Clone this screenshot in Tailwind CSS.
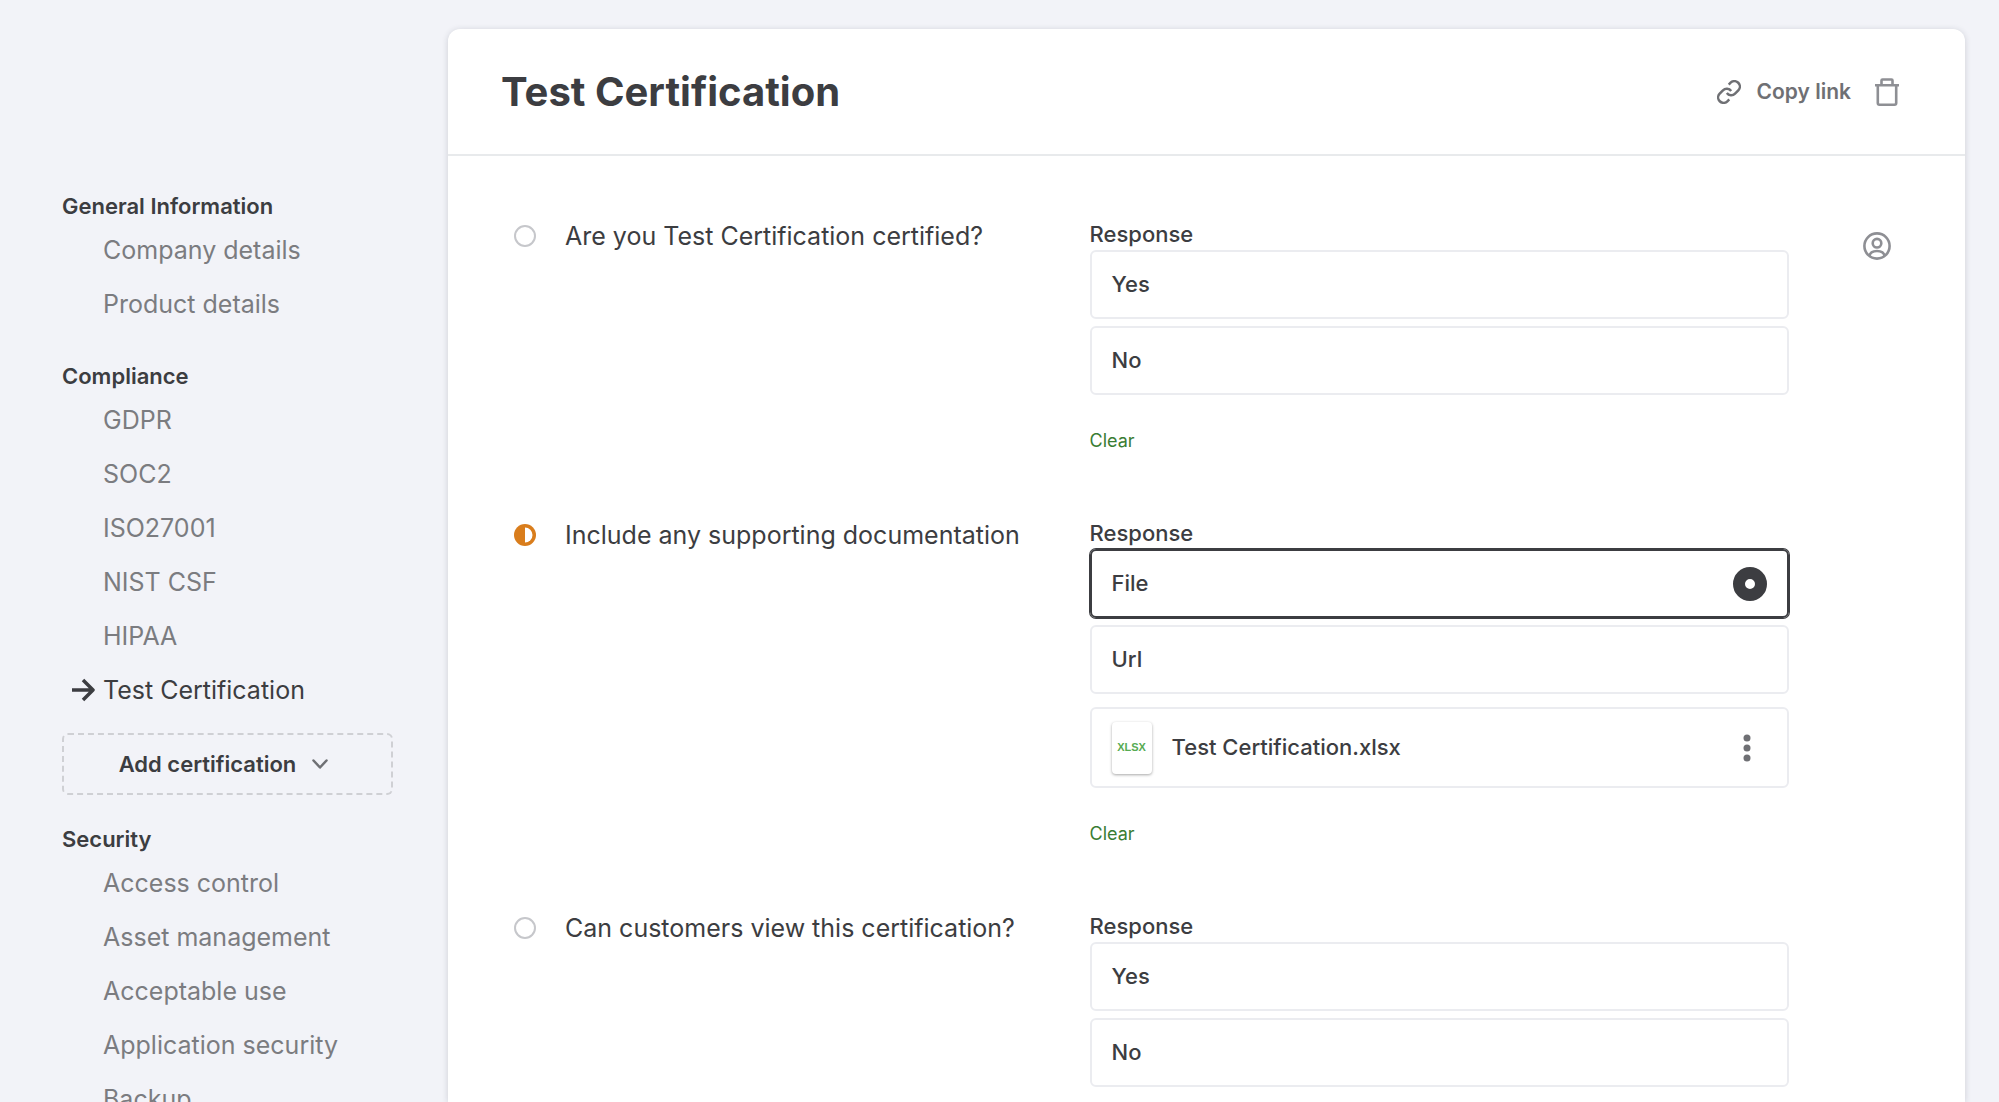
<!DOCTYPE html>
<html lang="en">
  <head>
    <meta charset="UTF-8" />
    <meta name="viewport" content="width=device-width, initial-scale=1.0" />
    <title>Test Certification</title>
    <script src="https://cdn.jsdelivr.net/npm/@tailwindcss/browser@4"></script>
  </head>
  <body class="bg-[#f2f3f8] font-['Inter',sans-serif] text-[#3c3d41]">
    <div class="flex h-screen overflow-hidden">
      <!-- Sidebar -->
      <aside class="w-[448px] shrink-0 pt-[190px] pl-[62px] pr-[55px]">
        <nav>
          <h2 class="text-[22px] leading-8 font-semibold">General Information</h2>
          <ul class="mt-px mb-[29px] pl-[41px] text-[25px] leading-[54px] text-[#7b7c80]">
            <li><a href="#" class="hover:text-black">Company details</a></li>
            <li><a href="#" class="hover:text-black">Product details</a></li>
          </ul>

          <h2 class="text-[22px] leading-8 font-semibold">Compliance</h2>
          <ul class="mt-px mb-4 pl-[41px] text-[25px] leading-[54px] text-[#7b7c80]">
            <li><a href="#" class="hover:text-black">GDPR</a></li>
            <li><a href="#" class="hover:text-black">SOC2</a></li>
            <li><a href="#" class="hover:text-black">ISO27001</a></li>
            <li><a href="#" class="hover:text-black">NIST CSF</a></li>
            <li><a href="#" class="hover:text-black">HIPAA</a></li>
            <li>
              <a href="#" class="-ml-8 flex items-center gap-2 text-[#3c3d41]">
                <svg class="h-6 w-6" viewBox="0 0 24 24" fill="none" stroke="currentColor" stroke-width="3.500">
                  <path d="M1 12h21M12 2l10 10l-10 10" stroke-linejoin="round" />
                </svg>
                Test Certification
              </a>
            </li>
          </ul>

          <button
            type="button"
            class="mb-7 flex h-[62px] w-full items-center justify-center gap-4 rounded-md border-2 border-dashed border-[#cfd0d4] pr-2 text-[22px] font-semibold"
          >
            Add certification
            <svg class="h-4 w-4" viewBox="0 0 16 16" fill="none" stroke="#6f7074" stroke-width="2.500">
              <path d="M1.500 4.500l6.500 7l6.500-7" stroke-linecap="round" stroke-linejoin="round" />
            </svg>
          </button>

          <h2 class="text-[22px] leading-8 font-semibold">Security</h2>
          <ul class="mt-px pl-[41px] text-[25px] leading-[54px] text-[#7b7c80]">
            <li><a href="#" class="hover:text-black">Access control</a></li>
            <li><a href="#" class="hover:text-black">Asset management</a></li>
            <li><a href="#" class="hover:text-black">Acceptable use</a></li>
            <li><a href="#" class="hover:text-black">Application security</a></li>
            <li><a href="#" class="hover:text-black">Backup</a></li>
          </ul>
        </nav>
      </aside>

      <!-- Certification panel -->
      <main class="mt-[29px] mr-[34px] flex-1 rounded-t-xl bg-white shadow-[0_1px_6px_rgba(40,42,60,0.18)]">
        <header class="flex h-[127px] items-center border-b-2 border-[#e8eaec] pr-[64px] pl-[53px]">
          <h1 class="flex-1 text-[40px] font-bold">Test Certification</h1>
          <button type="button" class="flex items-center gap-4 text-[21px] font-semibold text-[#6f7074]">
            <svg class="h-6 w-6" viewBox="1 1 22 22" fill="none" stroke="currentColor" stroke-width="2.300">
              <path d="M10 13a5 5 0 0 0 7.540.540l3-3a5 5 0 0 0-7.070-7.070l-1.720 1.710" />
              <path d="M14 11a5 5 0 0 0-7.540-.540l-3 3a5 5 0 0 0 7.070 7.070l1.710-1.710" />
            </svg>
            Copy link
          </button>
          <button type="button" aria-label="Delete" class="ml-[22px]">
            <svg class="h-7 w-7" viewBox="0 0 28 28" fill="none" stroke="#8e8f94" stroke-width="2.600">
              <path d="M2 7.200h24M8.500 7V2.500q0-1 1-1h9q1 0 1 1V7M4.800 7v18q0 1.700 1.700 1.700h15q1.700 0 1.700-1.700V7" />
            </svg>
          </button>
        </header>

        <form class="pt-[62px] pl-[66px]">
          <section class="mb-[60px] grid grid-cols-[51px_3fr_4fr_176px]">
            <svg class="mt-[7px] h-[22px] w-[22px]" viewBox="0 0 22 22">
              <circle cx="11" cy="11" r="10" fill="none" stroke="#c6c7cb" stroke-width="2" />
            </svg>
            <h3 class="text-[25px] leading-9">Are you Test Certification certified?</h3>
            <fieldset class="min-w-0">
              <legend class="text-[22px] leading-8 font-medium">Response</legend>
              <div class="grid gap-[7px] text-[22px] font-medium">
                <label class="flex h-[69px] items-center justify-between rounded-md border-2 border-[#ebecf0] px-5 has-checked:border-[#3c3d41] has-checked:ring-1 has-checked:ring-[#3c3d41]">
                  Yes
                  <input type="radio" name="certified" class="h-[34px] w-[34px] appearance-none rounded-full border-[12px] border-[#3c3d41] opacity-0 checked:opacity-100" />
                </label>
                <label class="flex h-[69px] items-center justify-between rounded-md border-2 border-[#ebecf0] px-5 has-checked:border-[#3c3d41] has-checked:ring-1 has-checked:ring-[#3c3d41]">
                  No
                  <input type="radio" name="certified" class="h-[34px] w-[34px] appearance-none rounded-full border-[12px] border-[#3c3d41] opacity-0 checked:opacity-100" />
                </label>
              </div>
              <button type="reset" class="mt-[30px] block text-[18px] leading-8 text-[#3a7d33]">Clear</button>
            </fieldset>
            <button type="button" aria-label="Assign" class="mt-[14px] h-7 w-7 justify-self-center">
              <svg viewBox="0 0 28 28" fill="none" stroke="#8e8f94" stroke-width="2.600">
                <circle cx="14" cy="14" r="12.600" />
                <circle cx="14" cy="11.200" r="4.300" />
                <path d="M6.500 24c.5-3.500 3.500-5 7.500-5s7 1.500 7.500 5" />
              </svg>
            </button>
          </section>

          <section class="mb-[60px] grid grid-cols-[51px_3fr_4fr_176px]">
            <svg class="mt-[7px] h-[22px] w-[22px]" viewBox="0 0 22 22">
              <circle cx="11" cy="11" r="11" fill="#d97d1c" />
              <path d="M11 3.500a7.500 7.500 0 0 1 0 15z" fill="#fff" />
            </svg>
            <h3 class="text-[25px] leading-9">Include any supporting documentation</h3>
            <fieldset class="min-w-0">
              <legend class="text-[22px] leading-8 font-medium">Response</legend>
              <div class="grid gap-[7px] text-[22px] font-medium">
                <label class="flex h-[69px] items-center justify-between rounded-md border-2 border-[#ebecf0] px-5 has-checked:border-[#3c3d41] has-checked:ring-1 has-checked:ring-[#3c3d41]">
                  File
                  <input type="radio" name="documentation" checked class="h-[34px] w-[34px] appearance-none rounded-full border-[12px] border-[#3c3d41] opacity-0 checked:opacity-100" />
                </label>
                <label class="flex h-[69px] items-center justify-between rounded-md border-2 border-[#ebecf0] px-5 has-checked:border-[#3c3d41] has-checked:ring-1 has-checked:ring-[#3c3d41]">
                  Url
                  <input type="radio" name="documentation" class="h-[34px] w-[34px] appearance-none rounded-full border-[12px] border-[#3c3d41] opacity-0 checked:opacity-100" />
                </label>
              </div>
              <div class="mt-[13px] flex h-[81px] items-center rounded-md border-2 border-[#ebecf0] px-5 text-[22px] font-medium">
                <span class="mr-5 flex h-[52px] w-10 items-center justify-center rounded-sm font-['Liberation_Sans',sans-serif] text-[11px] font-bold text-[#57ab52] shadow-[0_1px_3px_rgba(0,0,0,0.35)]">XLSX</span>
                <span class="flex-1">Test Certification.xlsx</span>
                <button type="button" aria-label="More" class="mr-4">
                  <svg class="h-7 w-2" viewBox="0 0 8 28" fill="#6f7074">
                    <circle cx="4" cy="4" r="3.500" />
                    <circle cx="4" cy="14" r="3.500" />
                    <circle cx="4" cy="24" r="3.500" />
                  </svg>
                </button>
              </div>
              <button type="reset" class="mt-[30px] block text-[18px] leading-8 text-[#3a7d33]">Clear</button>
            </fieldset>
          </section>

          <section class="grid grid-cols-[51px_3fr_4fr_176px]">
            <svg class="mt-[7px] h-[22px] w-[22px]" viewBox="0 0 22 22">
              <circle cx="11" cy="11" r="10" fill="none" stroke="#c6c7cb" stroke-width="2" />
            </svg>
            <h3 class="text-[25px] leading-9">Can customers view this certification?</h3>
            <fieldset class="min-w-0">
              <legend class="text-[22px] leading-8 font-medium">Response</legend>
              <div class="grid gap-[7px] text-[22px] font-medium">
                <label class="flex h-[69px] items-center justify-between rounded-md border-2 border-[#ebecf0] px-5 has-checked:border-[#3c3d41] has-checked:ring-1 has-checked:ring-[#3c3d41]">
                  Yes
                  <input type="radio" name="visible" class="h-[34px] w-[34px] appearance-none rounded-full border-[12px] border-[#3c3d41] opacity-0 checked:opacity-100" />
                </label>
                <label class="flex h-[69px] items-center justify-between rounded-md border-2 border-[#ebecf0] px-5 has-checked:border-[#3c3d41] has-checked:ring-1 has-checked:ring-[#3c3d41]">
                  No
                  <input type="radio" name="visible" class="h-[34px] w-[34px] appearance-none rounded-full border-[12px] border-[#3c3d41] opacity-0 checked:opacity-100" />
                </label>
              </div>
            </fieldset>
          </section>
        </form>
      </main>
    </div>
  </body>
</html>
